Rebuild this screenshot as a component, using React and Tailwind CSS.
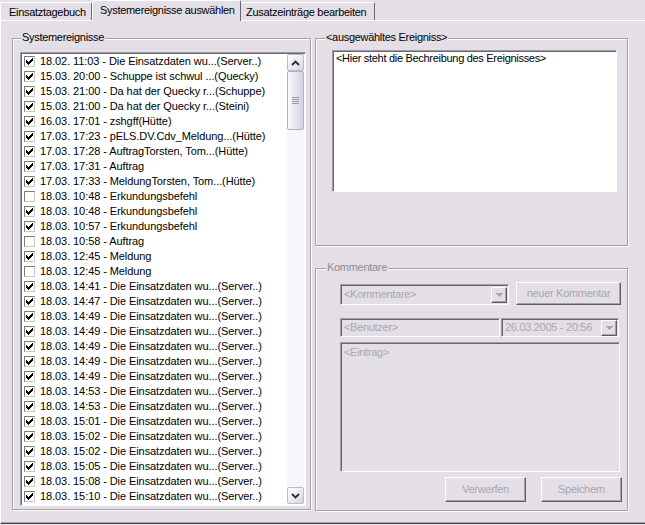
import React from "react";

const TIMES2 = ["14:41","14:47","14:49","14:49","14:49","14:49","14:49","14:53","14:53","15:01","15:02","15:02","15:05","15:08","15:10"];

const ROWS = [
  [true, "18.02. 11:03 - Die Einsatzdaten wu...(Server..)"],
  [true, "15.03. 20:00 - Schuppe ist schwul ...(Quecky)"],
  [true, "15.03. 21:00 - Da hat der Quecky r...(Schuppe)"],
  [true, "15.03. 21:00 - Da hat der Quecky r...(Steini)"],
  [true, "16.03. 17:01 - zshgff(Hütte)"],
  [true, "17.03. 17:23 - pELS.DV.Cdv_Meldung...(Hütte)"],
  [true, "17.03. 17:28 - AuftragTorsten, Tom...(Hütte)"],
  [true, "17.03. 17:31 - Auftrag"],
  [true, "17.03. 17:33 - MeldungTorsten, Tom...(Hütte)"],
  [false, "18.03. 10:48 - Erkundungsbefehl"],
  [true, "18.03. 10:48 - Erkundungsbefehl"],
  [true, "18.03. 10:57 - Erkundungsbefehl"],
  [false, "18.03. 10:58 - Auftrag"],
  [true, "18.03. 12:45 - Meldung"],
  [false, "18.03. 12:45 - Meldung"],
  ...TIMES2.map((t) => [true, `18.03. ${t} - Die Einsatzdaten wu...(Server..)`]),
];

function Check({ on }) {
  return (
    <div className="w-[11px] h-[11px] shrink-0 border border-t-[#7b7b7b] border-l-[#7b7b7b] border-r-[#c8c8c8] border-b-[#c8c8c8] bg-white flex items-center justify-center">
      {on && (
        <svg width="9" height="9" viewBox="0 0 9 9" shapeRendering="crispEdges">
          <polygon points="1,3 3,5 7,1 8,1 8,4 3,8 1,6" fill="#000" />
        </svg>
      )}
    </div>
  );
}

function ScrollBtn({ up }) {
  return (
    <div className="w-[17px] h-[17px] shrink-0 rounded-[2px] border border-[#bcb9cc] bg-gradient-to-br from-[#ffffff] to-[#d9d6e4] flex items-center justify-center">
      <svg width="9" height="6" viewBox="0 0 9 6">
        {up ? (
          <polyline points="1,5 4.5,1.5 8,5" fill="none" stroke="#2a2a3a" strokeWidth="1.8" />
        ) : (
          <polyline points="1,1 4.5,4.5 8,1" fill="none" stroke="#2a2a3a" strokeWidth="1.8" />
        )}
      </svg>
    </div>
  );
}

function Scrollbar() {
  return (
    <div className="w-[17px] h-full flex flex-col bg-[#f7f6fa]">
      <ScrollBtn up />
      <div className="w-[17px] h-[59px] rounded-[2px] border border-[#b3b0c4] bg-gradient-to-r from-[#fbfbfd] to-[#d3d0e0] flex flex-col items-center justify-center gap-[1px]">
        <div className="w-[7px] h-[1px] bg-[#9c99ad]" />
        <div className="w-[7px] h-[1px] bg-[#9c99ad]" />
        <div className="w-[7px] h-[1px] bg-[#9c99ad]" />
        <div className="w-[7px] h-[1px] bg-[#9c99ad]" />
      </div>
      <div className="flex-1" />
      <ScrollBtn />
    </div>
  );
}

const sunken =
  "border border-t-[#9f9da3] border-l-[#9f9da3] border-r-white border-b-white shadow-[inset_1px_1px_0_#69676d]";
const etched =
  "border border-[#a3a0a7] shadow-[inset_1px_1px_0_#ffffff,1px_1px_0_#ffffff]";
const raised =
  "border border-t-white border-l-white border-r-[#5f5d63] border-b-[#5f5d63] shadow-[inset_-1px_-1px_0_#a3a0a7]";

function DropBtn() {
  return (
    <div className={`w-[16px] h-[16px] shrink-0 ${raised} bg-[#e4dfe6] flex items-center justify-center`}>
      <svg width="7" height="4" viewBox="0 0 7 4" shapeRendering="crispEdges">
        <polygon points="0,0 7,0 3.5,4" fill="#a9a6ad" />
      </svg>
    </div>
  );
}

export default function App() {
  return (
    <div className="w-[645px] h-[525px] overflow-hidden bg-[#e4dfe6] font-['Liberation_Sans',Arial,sans-serif] text-[11px] leading-[13px] tracking-[-0.3px] text-black">
      {/* tab strip */}
      <div className="flex items-end h-[20px]">
        <div className="w-[92px] h-[18px] border-t border-l border-white border-r border-r-[#6a686e] rounded-tl-[2px] rounded-tr-[2px] pl-[8px] pt-[3px] whitespace-nowrap">
          Einsatztagebuch
        </div>
        <div className="relative z-10 -mb-px w-[149px] h-[21px] bg-[#e4dfe6] border-t border-l border-white border-r border-r-[#6a686e] rounded-tl-[2px] rounded-tr-[2px] pl-[7px] pt-[3px] whitespace-nowrap">
          Systemereignisse auswählen
        </div>
        <div className="w-[134px] h-[18px] border-t border-white border-r border-r-[#6a686e] rounded-tr-[2px] pl-[5px] pt-[3px] whitespace-nowrap">
          Zusatzeinträge bearbeiten
        </div>
      </div>

      {/* panel */}
      <div className="w-[650px] h-[504px] border-t border-l border-white border-b border-b-[#48464c] shadow-[inset_0_-1px_0_#a3a0a7] flex items-start pl-[11px] pt-[17px]">
        {/* left group */}
        <div className={`relative w-[299px] h-[472px] ${etched} pl-[7px] pt-[13px]`}>
          <div className="absolute left-[8px] top-[-8px] px-[1px] bg-[#e4dfe6]">Systemereignisse</div>
          <div className={`w-[286px] h-[454px] ${sunken} bg-white flex pl-[1px] pt-[1px] pr-[1px] pb-[1px]`}>
            <div className="flex-1 flex flex-col pl-[2px] overflow-hidden tracking-[-0.08px]">
              {ROWS.map(([on, txt], i) => (
                <div key={i} className="h-[15px] shrink-0 flex items-center gap-[5px] whitespace-nowrap">
                  <Check on={on} />
                  <span>{txt}</span>
                </div>
              ))}
            </div>
            <Scrollbar />
          </div>
        </div>

        {/* right column */}
        <div className="ml-[4px] flex flex-col">
          <div className={`relative w-[313px] h-[208px] ${etched} pl-[16px] pt-[11px]`}>
            <div className="absolute left-[9px] top-[-8px] px-[1px] bg-[#e4dfe6]">&lt;ausgewähltes Ereigniss&gt;</div>
            <div className={`w-[285px] h-[142px] ${sunken} bg-white pl-[3px] pt-[1px]`}>
              &lt;Hier steht die Bechreibung des Ereignisses&gt;
            </div>
          </div>

          <div className={`relative mt-[22px] w-[313px] h-[243px] ${etched} pl-[24px] pt-[13px]`}>
            <div className="absolute left-[10px] top-[-8px] px-[1px] bg-[#e4dfe6] text-[#8e8b93]">Kommentare</div>
            <div className="flex items-start gap-[7px] h-[23px]">
              <div className={`mt-[2px] w-[169px] h-[21px] ${sunken} flex items-center justify-between pl-[3px] pr-[1px] text-[#a9a6ad]`}>
                <span>&lt;Kommentare&gt;</span>
                <DropBtn />
              </div>
              <div className={`w-[105px] h-[23px] ${raised} flex items-center justify-center text-[#a9a6ad]`}>
                neuer Kommentar
              </div>
            </div>
            <div className="mt-[13px] flex gap-[1px]">
              <div className={`w-[160px] h-[19px] ${sunken} flex items-center pl-[3px] text-[#a9a6ad]`}>
                &lt;Benutzer&gt;
              </div>
              <div className={`w-[118px] h-[19px] ${sunken} flex items-center justify-between pl-[3px] pr-[1px] text-[#a9a6ad]`}>
                <span>26.03.2005 - 20:56</span>
                <DropBtn />
              </div>
            </div>
            <div className={`mt-[5px] w-[280px] h-[130px] ${sunken} pl-[3px] pt-[3px] text-[#a9a6ad]`}>
              &lt;Eintrag&gt;
            </div>
            <div className="mt-[5px] flex justify-end gap-[15px] pr-[5px]">
              <div className={`w-[81px] h-[25px] ${raised} flex items-center justify-center text-[#a9a6ad]`}>
                Verwerfen
              </div>
              <div className={`w-[81px] h-[25px] ${raised} flex items-center justify-center text-[#a9a6ad]`}>
                Speichern
              </div>
            </div>
          </div>
        </div>
      </div>
    </div>
  );
}
